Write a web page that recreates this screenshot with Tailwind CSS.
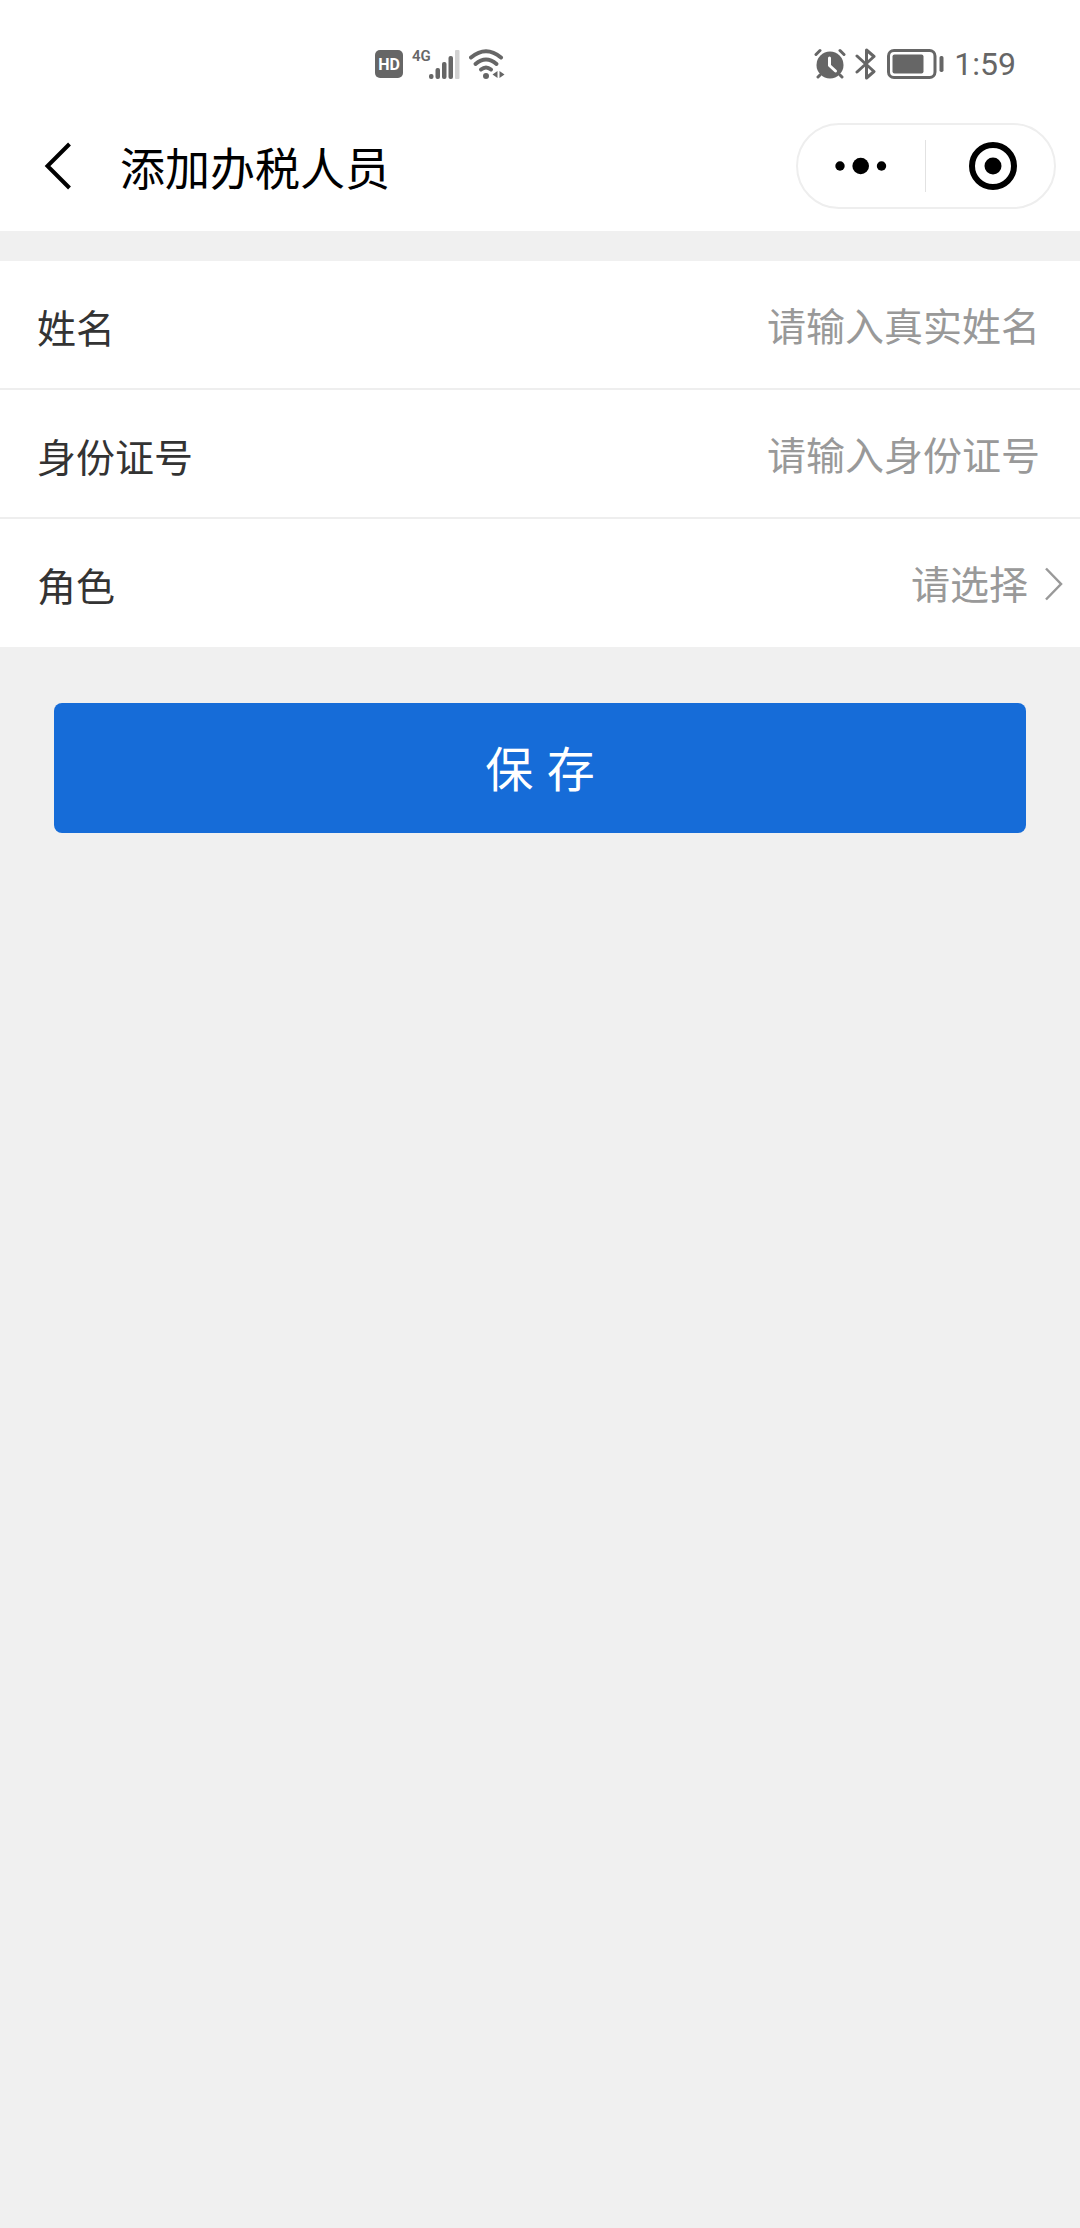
<!DOCTYPE html>
<html lang="zh-CN">
<head>
    <meta charset="UTF-8">
    <meta name="viewport" content="width=device-width, initial-scale=1.0">
    <title>添加办税人员</title>
    <script src="https://cdn.jsdelivr.net/npm/@tailwindcss/browser@4"></script>
</head>
<body class="min-h-screen bg-[#f0f0f0] font-['Liberation_Sans','Noto_Sans_CJK_SC',sans-serif]">
    <header class="bg-white">
        <!-- status bar -->
        <div class="flex items-center justify-between pt-[26px] pl-[375px] pr-16 h-[101px] text-[#666666]">
            <div class="flex items-center gap-2">
                <svg class="w-7 h-7" viewBox="0 0 28 28">
                    <rect width="28" height="28" rx="5" fill="currentColor"/>
                    <text x="14" y="20" text-anchor="middle" font-family="Roboto, sans-serif" font-size="16" font-weight="700" fill="#fff">HD</text>
                </svg>
                <svg class="w-[50px] h-8" viewBox="0 0 50 32" fill="currentColor">
                    <text x="1" y="13" font-family="Roboto, sans-serif" font-size="15" font-weight="600">4G</text>
                    <rect x="18" y="26" width="4.500" height="5" rx="2"/>
                    <rect x="24.500" y="20" width="4.500" height="11" rx="2"/>
                    <rect x="31" y="14" width="4.500" height="17" rx="2"/>
                    <rect x="37.500" y="8" width="4.500" height="23" rx="2"/>
                    <rect x="44" y="2" width="4.500" height="29" rx="1" fill="#d2d2d2"/>
                </svg>
                <svg class="w-9 h-8" viewBox="0 0 36 32" fill="none" stroke="currentColor" stroke-width="4" stroke-linecap="round">
                    <path d="M2 9.500Q17 -3 32 9.500"/>
                    <path d="M6.500 16Q17 7 27.500 16"/>
                    <path d="M12 21.500Q17 17.500 22 21.500"/>
                    <circle cx="17" cy="28" r="3" fill="currentColor" stroke="none"/>
                    <path d="M28.500 23v7l-5-3.500zM30.500 23v7l5-3.500z" fill="currentColor" stroke="none"/>
                </svg>
            </div>
            <div class="flex items-center gap-2">
                <svg class="w-8 h-8" viewBox="0 0 32 32" fill="none" stroke="currentColor" stroke-linecap="round">
                    <circle cx="16" cy="17" r="13.500" fill="currentColor" stroke="none"/>
                    <path d="M2 6.500l4-4M30 6.500l-4-4M6 27l-2 2M26 27l2 2" stroke-width="3"/>
                    <path d="M15.500 10v7.500l6 5.500" stroke="#fff" stroke-width="3" stroke-linejoin="round"/>
                </svg>
                <svg class="w-6 h-8" viewBox="0 0 24 32" fill="none" stroke="currentColor" stroke-width="3" stroke-linecap="round" stroke-linejoin="round">
                    <path d="M3 8l17 15.500-7.500 6.500V2L20 8.500 3 24"/>
                </svg>
                <svg class="w-[58px] h-8" viewBox="0 0 58 32" fill="currentColor">
                    <rect x="2.500" y="2.500" width="46.500" height="27" rx="5.500" fill="none" stroke="currentColor" stroke-width="3"/>
                    <rect x="6.500" y="6.500" width="31" height="19" rx="2"/>
                    <rect x="53.500" y="8" width="4" height="16" rx="1.700"/>
                </svg>
                <span class="pl-0.5 text-[32px] leading-8 font-['Roboto',sans-serif]">1:59</span>
            </div>
        </div>
        <!-- title bar -->
        <div class="flex items-center h-[130px] pl-9 pr-6">
            <button type="button" aria-label="返回" class="flex items-center justify-center w-11 h-16">
                <svg class="w-7 h-12" viewBox="0 0 28 48" fill="none" stroke="#000" stroke-width="4">
                    <path d="M25.500 2L3.500 24l22 22"/>
                </svg>
            </button>
            <h1 class="flex-1 pl-10 pt-2.5 text-[45px] leading-[60px] text-black">添加办税人员</h1>
            <div class="flex items-center w-[260px] h-[86px] rounded-full border-2 border-[#eeeeee]">
                <button type="button" aria-label="更多" class="w-1/2 flex items-center justify-center h-full">
                    <svg class="w-14 h-5" viewBox="0 0 56 20">
                        <circle cx="6" cy="10" r="4.700"/>
                        <circle cx="26.700" cy="10" r="8.300"/>
                        <circle cx="47.500" cy="10" r="4.700"/>
                    </svg>
                </button>
                <span class="shrink-0 w-px h-[52px] bg-[#e2e2e2]"></span>
                <button type="button" aria-label="关闭" class="w-1/2 flex items-center justify-center h-full pl-1.5">
                    <svg class="w-12 h-12" viewBox="0 0 48 48">
                        <circle cx="24" cy="24" r="21" fill="none" stroke="#000" stroke-width="6"/>
                        <circle cx="24" cy="24" r="8.500"/>
                    </svg>
                </button>
            </div>
        </div>
    </header>

    <form class="pt-[30px]">
        <div class="bg-white text-[39px] leading-[56px]">
            <div class="flex items-center h-[129px] pl-[37px] pr-10 border-b-2 border-[#eeeeee]">
                <label for="name" class="pt-2.5 text-[#333333]">姓名</label>
                <input id="name" type="text" placeholder="请输入真实姓名" class="flex-1 min-w-0 pt-1.5 text-right text-[#333333] placeholder:text-[#999999] outline-none">
            </div>
            <div class="flex items-center h-[129px] pl-[37px] pr-10 border-b-2 border-[#eeeeee]">
                <label for="idcard" class="pt-2.5 text-[#333333]">身份证号</label>
                <input id="idcard" type="text" placeholder="请输入身份证号" class="flex-1 min-w-0 pt-1.5 text-right text-[#333333] placeholder:text-[#999999] outline-none">
            </div>
            <div class="flex items-center h-32 pl-[37px] pr-4">
                <label for="role" class="pt-2.5 text-[#333333]">角色</label>
                <select id="role" class="flex-1 min-w-0 pt-1.5 appearance-none [text-align-last:right] text-[#999999] outline-none">
                    <option value="">请选择</option>
                </select>
                <svg class="ml-4 mt-0.5 w-5 h-9" viewBox="0 0 20 36" fill="none" stroke="#999" stroke-width="2.500">
                    <path d="M2 2.500L17 18 2 33.500"/>
                </svg>
            </div>
        </div>
        <div class="px-[54px] pt-14">
            <button type="submit" class="w-full h-[130px] pt-1.5 rounded-lg bg-[#166cd8] text-white text-[48px] leading-[64px]">保 存</button>
        </div>
    </form>
</body>
</html>
